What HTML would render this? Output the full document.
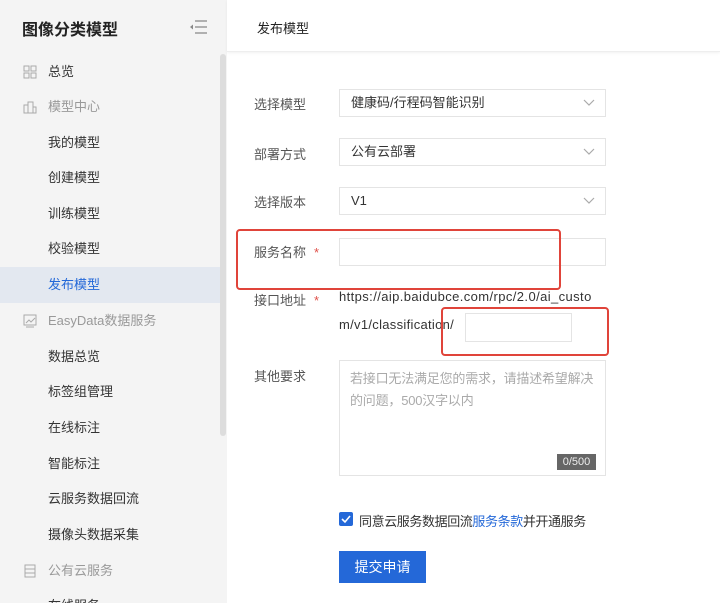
<!DOCTYPE html>
<html><head><meta charset="utf-8"><style>
*{margin:0;padding:0;box-sizing:border-box}
html,body{width:720px;height:603px;overflow:hidden}
body{background:#fff;font-family:"Liberation Sans","Noto Sans CJK SC",sans-serif;font-size:13px;color:#333;position:relative}
.sb{position:absolute;left:0;top:0;width:227px;height:603px;background:#f4f4f4;overflow:hidden}
.abs{position:absolute}
.title{left:22px;top:16px;font-size:16px;font-weight:bold;color:#222}
.nav{position:absolute;left:0;width:220px;height:36px;line-height:36px;font-size:13px;color:#333}
.nav.sub{padding-left:48px}
.nav.grp{padding-left:48px;color:#999}
.nav.act{background:#e3e8f0;color:#2468d8}
.ico{position:absolute;left:23px;top:11px;width:14px;height:14px}
.scroll{left:220px;top:54px;width:6px;height:382px;background:#ddd;border-radius:3px}
.hdr{left:227px;top:0;width:493px;height:52px;background:#fff;border-bottom:1px solid #eee;box-shadow:0 1px 3px rgba(0,0,0,.06);padding:18px 0 0 30px;font-size:13px;color:#222}
.lbl{left:254px;font-size:13px;color:#555}
.star{color:#e0514a;margin-left:8px}
.sel{left:339px;width:267px;height:28px;border:1px solid #e4e4e4;padding-left:11px;line-height:26px;font-size:13px;color:#333}
.sel svg{position:absolute;right:10px;top:9px}
.red{border:2px solid #e0443a;border-radius:4px}
</style></head><body>
<div class="sb">
<div class="abs title">图像分类模型</div>
<svg class="abs" style="left:186px;top:20px" width="22" height="14" viewBox="0 0 22 14"><path d="M4 7l3-2.5v5z" fill="#888"/><path d="M9 1h12M9 7h12M9 13h12" stroke="#888" stroke-width="1.2"/></svg>
<div class="nav grp" style="top:54px;color:#333"><svg class="ico" viewBox="0 0 14 14"><path d="M1 1h5v5H1zM8 1h5v5H8zM1 8h5v5H1zM8 8h5v5H8z" fill="none" stroke="#aaa"/></svg>总览</div>
<div class="nav grp" style="top:89px"><svg class="ico" viewBox="0 0 14 14"><path d="M1 13V5h4v8M5 13V2h5v11M10 13V7h3v6M0.5 13h13" fill="none" stroke="#aaa"/></svg>模型中心</div>
<div class="nav sub" style="top:125px">我的模型</div>
<div class="nav sub" style="top:160px">创建模型</div>
<div class="nav sub" style="top:196px">训练模型</div>
<div class="nav sub" style="top:231px">校验模型</div>
<div class="nav sub act" style="top:267px">发布模型</div>
<div class="nav grp" style="top:303px"><svg class="ico" viewBox="0 0 14 14"><path d="M1 1h12v10H1zM3 9l3-3 2 2 4-4M3 13h8" fill="none" stroke="#aaa"/></svg>EasyData数据服务</div>
<div class="nav sub" style="top:339px">数据总览</div>
<div class="nav sub" style="top:374px">标签组管理</div>
<div class="nav sub" style="top:410px">在线标注</div>
<div class="nav sub" style="top:446px">智能标注</div>
<div class="nav sub" style="top:481px">云服务数据回流</div>
<div class="nav sub" style="top:517px">摄像头数据采集</div>
<div class="nav grp" style="top:553px"><svg class="ico" viewBox="0 0 14 14"><path d="M2 1h10v12H2zM2 5h10M2 9h10" fill="none" stroke="#aaa"/></svg>公有云服务</div>
<div class="nav sub" style="top:588px">在线服务</div>
</div>
<div class="abs scroll"></div>
<div class="abs hdr">发布模型</div>

<div class="abs lbl" style="top:94px">选择模型</div>
<div class="abs sel" style="top:89px">健康码/行程码智能识别<svg width="12" height="8" viewBox="0 0 12 8"><path d="M1 1l5 5 5-5" fill="none" stroke="#aaa" stroke-width="1.2"/></svg></div>
<div class="abs lbl" style="top:144px">部署方式</div>
<div class="abs sel" style="top:138px">公有云部署<svg width="12" height="8" viewBox="0 0 12 8"><path d="M1 1l5 5 5-5" fill="none" stroke="#aaa" stroke-width="1.2"/></svg></div>
<div class="abs lbl" style="top:192px">选择版本</div>
<div class="abs sel" style="top:187px">V1<svg width="12" height="8" viewBox="0 0 12 8"><path d="M1 1l5 5 5-5" fill="none" stroke="#aaa" stroke-width="1.2"/></svg></div>
<div class="abs lbl" style="top:242px">服务名称<span class="star">*</span></div>
<div class="abs sel" style="top:238px"></div>
<div class="abs lbl" style="top:290px">接口地址<span class="star">*</span></div>
<div class="abs" style="left:339px;top:289px;font-size:13px;color:#333;letter-spacing:0.4px">https://aip.baidubce.com/rpc/2.0/ai_custo</div>
<div class="abs" style="left:339px;top:317px;font-size:13px;color:#333;letter-spacing:0.3px">m/v1/classification/</div>
<div class="abs" style="left:465px;top:313px;width:107px;height:29px;border:1px solid #e4e4e4"></div>
<div class="abs red" style="left:236px;top:229px;width:325px;height:61px"></div>
<div class="abs red" style="left:441px;top:307px;width:168px;height:49px"></div>
<div class="abs lbl" style="top:366px">其他要求</div>
<div class="abs" style="left:339px;top:360px;width:267px;height:116px;border:1px solid #e4e4e4;padding:7px 6px 8px 10px;line-height:22px;color:#aaa;font-size:13px;letter-spacing:-0.2px">若接口无法满足您的需求，请描述希望解决的问题，500汉字以内</div>
<div class="abs" style="left:557px;top:454px;width:39px;height:16px;background:#666;color:#eee;font-size:11px;line-height:16px;text-align:center">0/500</div>
<div class="abs" style="left:339px;top:512px;width:14px;height:14px;background:#2468d8;border-radius:2px"><svg width="14" height="14" viewBox="0 0 14 14"><path d="M3 7l3 3 5-6" fill="none" stroke="#fff" stroke-width="1.6"/></svg></div>
<div class="abs" style="left:359px;top:511px;font-size:13px;color:#333;letter-spacing:-0.4px">同意云服务数据回流<span style="color:#2468d8">服务条款</span>并开通服务</div>
<div class="abs" style="left:339px;top:551px;width:87px;height:32px;background:#2468d8;color:#fff;font-size:14px;line-height:32px;text-align:center">提交申请</div>
</body></html>
